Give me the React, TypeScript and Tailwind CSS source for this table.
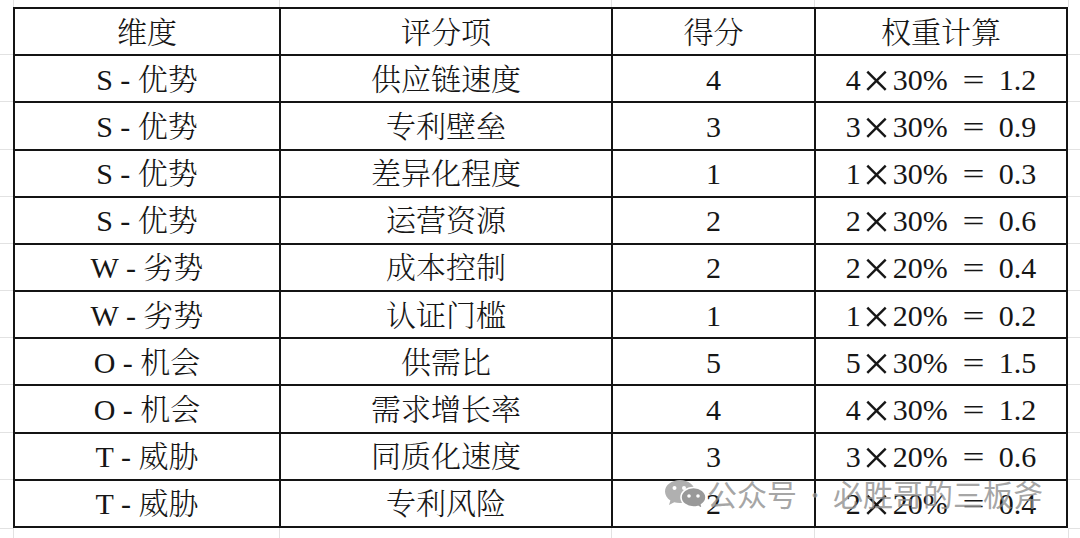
import React from "react";

const rows: [string, string, string, string, string, string][] = [
  ["S - 优势", "供应链速度", "4", "4", "30", "1.2"],
  ["S - 优势", "专利壁垒", "3", "3", "30", "0.9"],
  ["S - 优势", "差异化程度", "1", "1", "30", "0.3"],
  ["S - 优势", "运营资源", "2", "2", "30", "0.6"],
  ["W - 劣势", "成本控制", "2", "2", "20", "0.4"],
  ["W - 劣势", "认证门槛", "1", "1", "20", "0.2"],
  ["O - 机会", "供需比", "5", "5", "30", "1.5"],
  ["O - 机会", "需求增长率", "4", "4", "30", "1.2"],
  ["T - 威胁", "同质化速度", "3", "3", "20", "0.6"],
  ["T - 威胁", "专利风险", "2", "2", "20", "0.4"],
];

const font = "font-['Liberation_Serif','Noto_Serif_CJK_SC','Noto_Sans_CJK_SC',serif]";

function Calc({ a, p, r }: { a: string; p: string; r: string }) {
  return (
    <span className="whitespace-nowrap">
      {a}
      <span className="inline-block w-[32px] text-center">
        <span className="inline-block scale-[1.65]">×</span>
      </span>
      {p}%
      <span className="inline-block w-[51px] text-center">
        <span className="inline-block scale-x-[1.3]">=</span>
      </span>
      {r}
    </span>
  );
}

function WeChat() {
  return (
    <svg width="42" height="28" viewBox="0 0 42 28">
      <path d="M16 1C7.7 1 1 6.2 1 12.6c0 3.6 2.1 6.8 5.4 8.9L5 26l5.2-2.8c1.8.5 3.7.8 5.8.8 8.3 0 15-5.2 15-11.4S24.3 1 16 1z" fill="#b0b0b0" />
      <path d="M29.5 8.5c-7 0-12.5 4.4-12.5 9.8s5.5 9.7 12.5 9.7c1.6 0 3.1-.2 4.5-.6L38.5 30l-1-4.3c2.8-1.8 4.5-4.5 4.5-7.4 0-5.4-5.5-9.8-12.5-9.8z" fill="#999999" stroke="#fff" strokeWidth="1.6" />
      <circle cx="10.5" cy="9" r="2" fill="#fff" />
      <circle cx="20" cy="9" r="2" fill="#fff" />
      <circle cx="25" cy="17" r="1.8" fill="#fff" />
      <circle cx="34" cy="17" r="1.8" fill="#fff" />
    </svg>
  );
}

export default function App() {
  const header = ["维度", "评分项", "得分", "权重计算"];
  const g = "border-[#e2e2e2]";
  const cells: React.ReactNode[] = [];

  // top band
  cells.push(<div key="t0" />);
  for (let c = 1; c <= 4; c++) cells.push(<div key={"t" + c} className={`border-l ${g}`} />);
  cells.push(<div key="t5" className={`border-l ${g}`} />);

  for (let r = 0; r < 11; r++) {
    const last = r === 10;
    cells.push(<div key={"l" + r} className={r === 0 ? "" : `border-t ${g}`} />);
    const vals = r === 0 ? header : rows[r - 1];
    for (let c = 0; c < 4; c++) {
      let cls = "flex items-center justify-center border-l-2 border-t-2 border-[#141414]";
      if (c === 3) cls += " border-r-2";
      if (last) cls += " border-b-2";
      let content: React.ReactNode = vals[c];
      if (r > 0 && c === 3) {
        const v = rows[r - 1];
        content = <Calc a={v[3]} p={v[4]} r={v[5]} />;
      }
      cells.push(
        <div key={"c" + r + "-" + c} className={cls}>
          <span className="leading-none pt-[2px]">{content}</span>
        </div>
      );
    }
    cells.push(<div key={"r" + r} className={r === 0 ? "" : `border-t ${g}`} />);
  }

  // bottom band
  cells.push(<div key="b0" className={`border-t ${g}`} />);
  for (let c = 1; c <= 4; c++) cells.push(<div key={"b" + c} className={`border-l ${g}`} />);
  cells.push(<div key="b5" className={`border-l border-t ${g}`} />);

  return (
    <div className={`relative w-[1080px] h-[538px] overflow-hidden bg-white text-[#161616] text-[30px] font-light ${font}`}>
      <div className="grid w-full h-full grid-cols-[13px_266px_332px_203px_254px_12px] grid-rows-[7px_repeat(10,47.18px)_49.18px_1fr]">
        {cells}
      </div>
      <div className="absolute left-[664px] top-[478px] flex items-center text-[30px] leading-none font-normal text-[#8e8e8e]/80 font-['Noto_Sans_CJK_SC',sans-serif]">
        <WeChat />
        <span className="ml-[1px]">公众号</span>
        <span className="inline-block w-[36px] text-center text-[22px]">·</span>
        <span>必胜哥的三板斧</span>
      </div>
    </div>
  );
}
